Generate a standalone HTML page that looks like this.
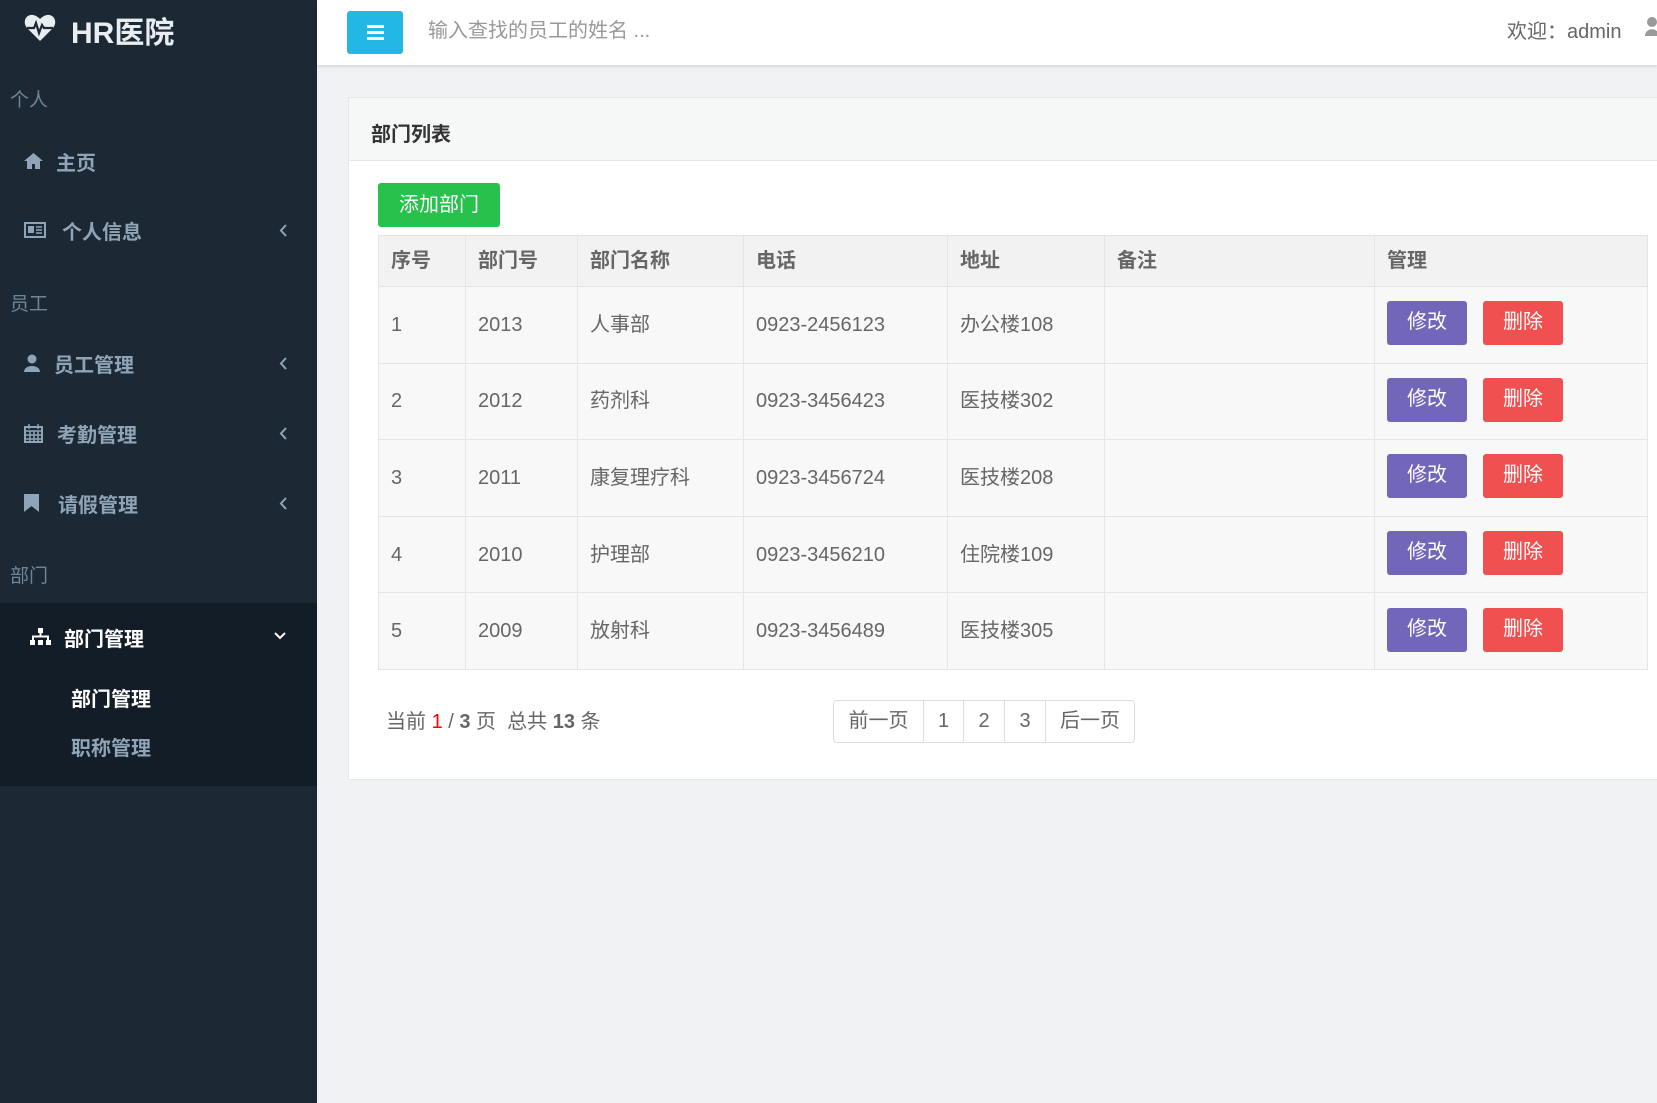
<!DOCTYPE html>
<html><head><meta charset="utf-8"><style>
*{margin:0;padding:0;box-sizing:border-box}
body{width:1657px;height:1103px;overflow:hidden;background:#f0f2f4;font-family:"Liberation Sans","Noto Sans CJK SC",sans-serif;position:relative;color:#555}
.a{position:absolute;white-space:nowrap}
#side{position:absolute;left:0;top:0;width:317px;height:1103px;background:#1c2935}
.sec{color:#6f8597;font-size:19px;left:10px}
.item{color:#8fa5b7;font-size:20px;font-weight:bold;left:56px}
.ic{left:24px}
#hdr{position:absolute;left:317px;top:0;right:0;height:65px;background:#fff;box-shadow:0 2px 3px rgba(0,0,0,.1)}
#panel{position:absolute;left:348px;top:97px;width:1320px;height:683px;background:#fff;border:1px solid #e5e8ea}
#ph{position:absolute;left:0;top:0;right:0;height:63px;background:#f6f7f7;border-bottom:1px solid #e5e8ea}
table{position:absolute;left:29px;top:137px;border-collapse:collapse;font-size:20px;color:#666}
td,th{border:1px solid #e3e5e6;text-align:left;padding-left:12px;background:#f8f8f8;vertical-align:middle;line-height:24px}
th{height:51px;font-weight:bold;background:#f2f2f2;color:#666}
td{height:76.6px}
.b{display:inline-block;width:80px;height:44px;line-height:42px;text-align:center;color:#fff;border-radius:3px;font-size:20px;vertical-align:middle;margin-top:-3px}
.b+.b{margin-left:16px}
.pg{position:absolute;left:484px;top:602px;height:43px;border:1px solid #ddd;border-radius:4px;display:flex;font-size:20px;color:#666;background:#fff}
.pg span{border-left:1px solid #ddd;line-height:41px;text-align:center}
.chv{position:absolute;left:279px}
</style></head><body>
<div id="side">
 <svg class="a" style="left:24px;top:14px" width="32" height="28" viewBox="0 0 32 28"><path d="M16 27 L3 14 C-2 8 2 0 9 1 C12 1.5 14 3 16 5 C18 3 20 1.5 23 1 C30 0 34 8 29 14 Z" fill="#e8edf2"/><path d="M3 14 H10 L12 9 L15 19 L18 11 L20 14 H29" stroke="#1c2935" stroke-width="2.2" fill="none"/></svg>
 <div class="a" style="left:71px;top:8px;color:#e8edf2;font-size:30px;font-weight:bold">HR医院</div>
 <div class="a sec" style="top:85px">个人</div>
 <svg class="a" style="left:24px;top:153px" width="19" height="16"><path d="M9.5 0L0 8h3v8h5v-5h3v5h5V8h3Z" fill="#8fa5b7"/></svg>
 <div class="a item" style="top:147px">主页</div>
 <svg class="a" style="left:24px;top:222px" width="22" height="16"><rect x="1" y="1" width="20" height="14" fill="none" stroke="#8fa5b7" stroke-width="2"/><rect x="4" y="4" width="6" height="7" fill="#8fa5b7"/><path d="M12 5h6M12 8h6M12 11h6" stroke="#8fa5b7" stroke-width="1.5"/></svg>
 <div class="a item" style="top:216px;left:62px">个人信息</div>
 <svg class="chv" style="top:224px" width="8" height="13"><path d="M7 1L2 6.5 7 12" stroke="#8fa5b7" stroke-width="2" fill="none"/></svg>
 <div class="a sec" style="top:289px">员工</div>
 <svg class="a" style="left:24px;top:354px" width="16" height="18"><circle cx="8" cy="5" r="4.5" fill="#8fa5b7"/><path d="M0 18 C0 10 16 10 16 18Z" fill="#8fa5b7"/></svg>
 <div class="a item" style="top:349px;left:54px">员工管理</div>
 <svg class="chv" style="top:357px" width="8" height="13"><path d="M7 1L2 6.5 7 12" stroke="#8fa5b7" stroke-width="2" fill="none"/></svg>
 <svg class="a" style="left:24px;top:424px" width="19" height="19"><rect x="1" y="3" width="17" height="15" fill="none" stroke="#8fa5b7" stroke-width="2"/><path d="M1 7h17M6 7v11M10 7v11M14 7v11M1 11h17M1 15h17M5 0v5M14 0v5" stroke="#8fa5b7" stroke-width="1.5"/></svg>
 <div class="a item" style="top:419px;left:57px">考勤管理</div>
 <svg class="chv" style="top:427px" width="8" height="13"><path d="M7 1L2 6.5 7 12" stroke="#8fa5b7" stroke-width="2" fill="none"/></svg>
 <svg class="a" style="left:24px;top:494px" width="15" height="18"><path d="M0 0h15v18l-7.5-6L0 18Z" fill="#8fa5b7"/></svg>
 <div class="a item" style="top:489px;left:58px">请假管理</div>
 <svg class="chv" style="top:497px" width="8" height="13"><path d="M7 1L2 6.5 7 12" stroke="#8fa5b7" stroke-width="2" fill="none"/></svg>
 <div class="a sec" style="top:561px">部门</div>
 <div class="a" style="left:0;top:603px;width:317px;height:183px;background:#131d27"></div>
 <svg class="a" style="left:30px;top:628px" width="21" height="17"><rect x="8" y="0" width="5" height="5" fill="#fff"/><path d="M10.5 5v4M3 12V8.5h15V12" stroke="#fff" stroke-width="2" fill="none"/><rect x="0" y="12" width="5" height="5" fill="#fff"/><rect x="8" y="12" width="5" height="5" fill="#fff"/><rect x="16" y="12" width="5" height="5" fill="#fff"/></svg>
 <div class="a" style="left:64px;top:623px;color:#fff;font-size:20px;font-weight:bold">部门管理</div>
 <svg class="a" style="left:274px;top:632px" width="12" height="8"><path d="M1 1l5 5 5-5" stroke="#fff" stroke-width="2" fill="none"/></svg>
 <div class="a" style="left:71px;top:683px;color:#fff;font-size:20px;font-weight:bold">部门管理</div>
 <div class="a" style="left:71px;top:732px;color:#8fa5b7;font-size:20px;font-weight:bold">职称管理</div>
</div>
<div id="hdr">
 <div class="a" style="left:30px;top:11px;width:56px;height:43px;background:#23b7e5;border-radius:3px"></div>
 <div class="a" style="left:50px;top:25px;width:17px;height:3px;background:#fff;box-shadow:0 6px 0 #fff,0 12px 0 #fff"></div>
 <div class="a" style="left:111px;top:14px;font-size:20px;color:#999">输入查找的员工的姓名 ...</div>
 <div class="a" style="left:1190px;top:15px;font-size:20px;color:#666">欢迎：admin</div>
 <svg class="a" style="left:1328px;top:17px" width="14" height="20"><circle cx="7" cy="5" r="5" fill="#999"/><path d="M0 19C0 10 14 10 14 19Z" fill="#999"/></svg>
</div>
<div id="panel">
 <div id="ph"><div class="a" style="left:22px;top:20px;font-size:20px;font-weight:bold;color:#333">部门列表</div></div>
 <div class="a" style="left:29px;top:85px;width:122px;height:44px;background:#27c24c;border-radius:3px;color:#fff;font-size:20px;line-height:44px;text-align:center">添加部门</div>
 <table>
  <tr><th style="width:87px">序号</th><th style="width:112px">部门号</th><th style="width:166px">部门名称</th><th style="width:204px">电话</th><th style="width:157px">地址</th><th style="width:270px">备注</th><th style="width:273px">管理</th></tr>
  <tr><td>1</td><td>2013</td><td>人事部</td><td>0923-2456123</td><td>办公楼108</td><td></td><td><span class="b" style="background:#7266ba">修改</span><span class="b" style="background:#f05050">删除</span></td></tr>
  <tr><td>2</td><td>2012</td><td>药剂科</td><td>0923-3456423</td><td>医技楼302</td><td></td><td><span class="b" style="background:#7266ba">修改</span><span class="b" style="background:#f05050">删除</span></td></tr>
  <tr><td>3</td><td>2011</td><td>康复理疗科</td><td>0923-3456724</td><td>医技楼208</td><td></td><td><span class="b" style="background:#7266ba">修改</span><span class="b" style="background:#f05050">删除</span></td></tr>
  <tr><td>4</td><td>2010</td><td>护理部</td><td>0923-3456210</td><td>住院楼109</td><td></td><td><span class="b" style="background:#7266ba">修改</span><span class="b" style="background:#f05050">删除</span></td></tr>
  <tr><td>5</td><td>2009</td><td>放射科</td><td>0923-3456489</td><td>医技楼305</td><td></td><td><span class="b" style="background:#7266ba">修改</span><span class="b" style="background:#f05050">删除</span></td></tr>
 </table>
 <div class="a" style="left:37px;top:607px;font-size:20px;color:#666">当前 <b style="color:#f00;font-weight:normal">1</b> / <b>3</b> 页 &nbsp;总共 <b>13</b> 条</div>
 <div class="pg"><span style="width:89px;border:0">前一页</span><span style="width:40px">1</span><span style="width:41px">2</span><span style="width:41px">3</span><span style="width:89px">后一页</span></div>
</div>
</body></html>
